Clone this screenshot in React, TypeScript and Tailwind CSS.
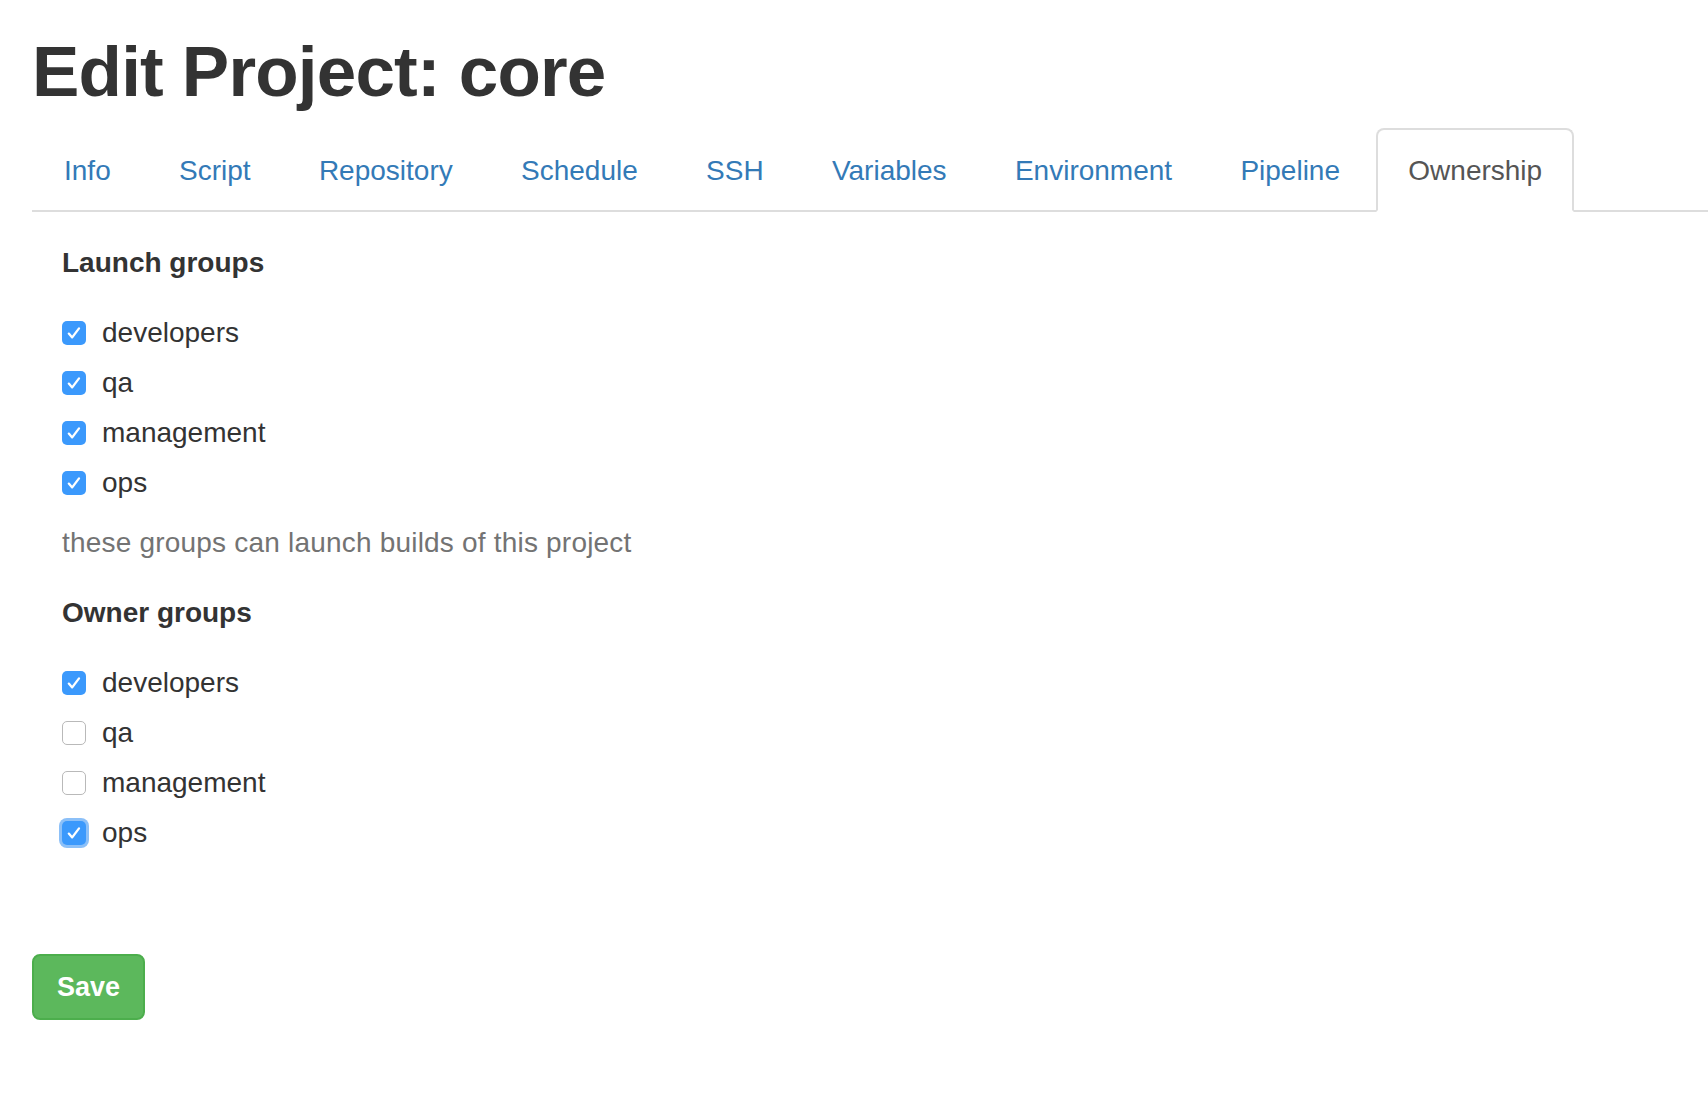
import React from "react";

const tabs = ["Info", "Script", "Repository", "Schedule", "SSH", "Variables", "Environment", "Pipeline", "Ownership"];

type Group = { name: string; checked: boolean; focused?: boolean };

const launchGroups: Group[] = [
    { name: "developers", checked: true },
    { name: "qa", checked: true },
    { name: "management", checked: true },
    { name: "ops", checked: true },
];

const ownerGroups: Group[] = [
    { name: "developers", checked: true },
    { name: "qa", checked: false },
    { name: "management", checked: false },
    { name: "ops", checked: true, focused: true },
];

function Box({ checked, focused }: { checked: boolean; focused?: boolean })
{
    if (!checked)
    {
        return <span className="w-[24px] h-[24px] rounded-[5px] border-[1.5px] border-[#b9b9b9] bg-white shrink-0" />;
    }
    return (
        <span className={"w-[24px] h-[24px] rounded-[5px] bg-[#3b99fc] shrink-0 flex items-center justify-center " + (focused ? "ring-[3px] ring-[#8cc0f8]" : "")}>
            <svg width="24" height="24" viewBox="0 0 24 24" fill="none">
                <path d="M6.8 12.6 L10.2 16.4 L17 7.4" stroke="white" strokeWidth="2.3" strokeLinecap="round" strokeLinejoin="round" />
            </svg>
        </span>
    );
}

function GroupList({ title, groups }: { title: string; groups: Group[] })
{
    return (
        <div>
            <h3 className="font-bold text-[28px] leading-[40px]">{title}</h3>
            <div className="flex flex-col gap-[10px] mt-[30px]">
                {groups.map((g) => (
                    <label key={g.name} className="flex items-center gap-[16px] h-[40px] leading-[40px] text-[28px]">
                        <Box checked={g.checked} focused={g.focused} />
                        <span>{g.name}</span>
                    </label>
                ))}
            </div>
        </div>
    );
}

export default function App()
{
    return (
        <div className="min-h-screen bg-white text-[#333] font-['Liberation_Sans',Arial,sans-serif] pl-[32px] pt-[33px]">
            <h1 className="text-[71px] leading-[78px] font-bold tracking-[-0.8px] mb-[17px]">Edit Project: core</h1>

            <ul className="flex border-b-2 border-[#ddd]">
                {tabs.map((t) => {
                    const active = t === "Ownership";
                    return (
                        <li key={t} className="mb-[-2px] mr-[4.3px]">
                            <a className={"block px-[30px] pt-[21px] pb-[19px] text-[28px] leading-[40px] rounded-t-[8px] border-2 " + (active ? "border-[#ddd] border-b-white bg-white text-[#555]" : "border-transparent text-[#337ab7]")}>
                                {t}
                            </a>
                        </li>
                    );
                })}
            </ul>

            <div className="pl-[30px] pt-[31px]">
                <GroupList title="Launch groups" groups={launchGroups} />
                <p className="text-[28px] leading-[40px] text-[#737373] tracking-[0.2px] mt-[20px]">these groups can launch builds of this project</p>
                <div className="mt-[30px]">
                    <GroupList title="Owner groups" groups={ownerGroups} />
                </div>
            </div>

            <button className="mt-[101px] px-[23px] h-[66px] rounded-[8px] bg-[#5cb85c] border-2 border-[#4cae4c] text-white font-bold text-[27px] leading-[40px]">
                Save
            </button>
        </div>
    );
}
